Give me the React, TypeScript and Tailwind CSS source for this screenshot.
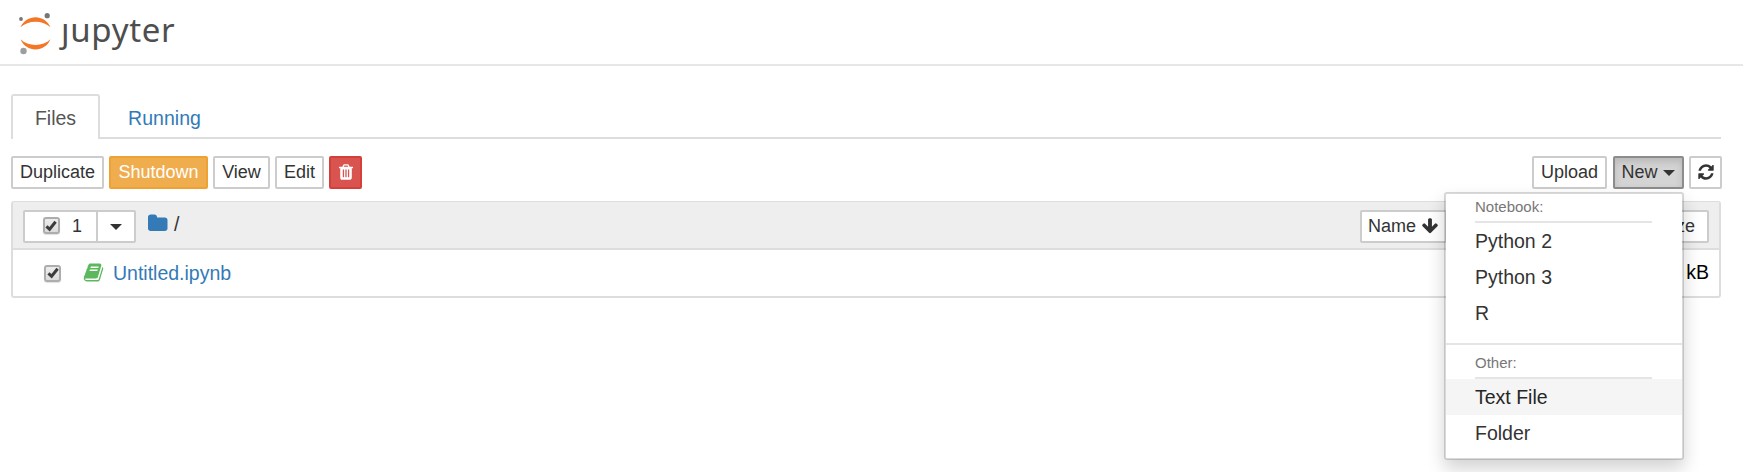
import React from "react";

const PATHS = {
  folder:
    "M1664 608v704q0 92-66 158t-158 66h-1216q-92 0-158-66t-66-158v-960q0-92 66-158t158-66h320q92 0 158 66t66 158v32h672q92 0 158 66t66 158z",
  book: "M1703 478q40 57 18 129l-275 906q-19 64-76.5 107.5t-122.5 43.5h-923q-77 0-148.5-53.5t-99.5-131.5q-24-67-2-127 0-4 3-27t4-37q1-8-3-21.5t-3-19.5q2-11 8-21t16.5-23.5 16.5-23.5q23-38 45-91.5t30-91.5q3-10 .5-30t-.5-28q3-11 17-28t17-23q21-36 42-92t25-90q1-9-2.5-32t.5-28q4-13 22-30.5t22-22.5q19-26 42.5-84.5t27.5-96.5q1-8-3-25.5t-2-26.5q2-8 9-18t18-23 17-21q8-12 16.5-30.5t15-35 16-36 19.5-32 26.5-23.5 36-11.5 47.5 5.5l-1 3q38-9 51-9h761q74 0 114 56t18 130l-274 906q-36 119-71.5 153.5t-128.5 34.5h-869q-27 0-38 15-11 16-1 43 24 70 144 70h923q29 0 56-15.5t35-41.5l300-987q7-22 5-57 38 15 59 43zm-1064 2q-4 13 2 22.5t20 9.5h608q13 0 25.5-9.5t16.5-22.5l21-64q4-13-2-22.5t-20-9.5h-608q-13 0-25.5 9.5t-16.5 22.5zm-83 256q-4 13 2 22.5t20 9.5h608q13 0 25.5-9.5t16.5-22.5l21-64q4-13-2-22.5t-20-9.5h-608q-13 0-25.5 9.5t-16.5 22.5z",
  arrowDown:
    "M1675 832q0 53-37 90l-651 652q-39 37-91 37-53 0-90-37l-651-652q-38-36-38-90 0-53 38-91l74-75q39-37 91-37 53 0 90 37l294 294v-704q0-52 38-90t90-38h128q52 0 90 38t38 90v704l294-294q37-37 90-37 52 0 91 37l75 75q37 39 37 91z",
  refresh:
    "M1639 1056q0 5-1 7-64 268-268 434.5t-478 166.5q-146 0-282.5-55t-243.5-157l-129 129q-19 19-45 19t-45-19-19-45v-448q0-26 19-45t45-19h448q26 0 45 19t19 45-19 45l-137 137q71 66 161 102t187 36q134 0 250-65t186-179q11-17 53-117 8-23 30-23h192q13 0 22.5 9.5t9.5 22.5zm25-800v448q0 26-19 45t-45 19h-448q-26 0-45-19t-19-45 19-45l138-138q-148-137-349-137-134 0-250 65t-186 179q-11 17-53 117-8 23-30 23h-199q-13 0-22.5-9.5t-9.5-22.5v-7q65-268 270-434.5t480-166.5q146 0 284 55.5t245 156.5l130-129q19-19 45-19t45 19 19 45z",
  trash:
    "M704 1376v-704q0-14-9-23t-23-9h-64q-14 0-23 9t-9 23v704q0 14 9 23t23 9h64q14 0 23-9t9-23zm256 0v-704q0-14-9-23t-23-9h-64q-14 0-23 9t-9 23v704q0 14 9 23t23 9h64q14 0 23-9t9-23zm256 0v-704q0-14-9-23t-23-9h-64q-14 0-23 9t-9 23v704q0 14 9 23t23 9h64q14 0 23-9t9-23zm-544-992h448l-48-117q-7-9-17-11h-317q-10 2-17 11zm928 32v64q0 14-9 23t-23 9h-96v948q0 83-47 143.5t-113 60.5h-832q-66 0-113-58.5t-47-141.5v-952h-96q-14 0-23-9t-9-23v-64q0-14 9-23t23-9h309l70-167q15-37 54-63t79-26h320q40 0 79 26t54 63l70 167h309q14 0 23 9t9 23z",
};

function Icon({ name, className }: { name: keyof typeof PATHS; className: string }) {
  return (
    <svg viewBox="0 0 1792 1792" fill="currentColor" className={`shrink-0 ${className}`}>
      <path d={PATHS[name]} />
    </svg>
  );
}

function Caret() {
  return (
    <svg viewBox="0 0 12 6" fill="currentColor" className="mt-0.5 h-1.5 w-3 shrink-0">
      <path d="M0 0h12L6 6z" />
    </svg>
  );
}

function Checkbox() {
  return (
    <span className="flex size-[17px] shrink-0 items-center justify-center rounded-[3px] border-2 border-[#adadad] bg-linear-to-b from-[#ededed] to-[#dcdcdc] shadow-[0_1px_1px_rgba(0,0,0,0.12)]">
      <svg viewBox="0 0 12 12" className="size-3 overflow-visible" fill="none" stroke="#3c3c3c" strokeWidth="3">
        <path d="M1.4 6.3 4.6 9.2 10.6 1.8" />
      </svg>
    </span>
  );
}

function Button({ className = "", children }: { className?: string; children: React.ReactNode }) {
  return (
    <button
      className={`flex h-[33px] shrink-0 items-center justify-center rounded-[2px] border-2 pb-[2px] text-lg leading-none whitespace-nowrap ${className}`}
    >
      {children}
    </button>
  );
}

const plain = "border-[#ccc] bg-white";

function Logo() {
  return (
    <div className="flex pt-3 pl-[18px]">
      <svg viewBox="0 0 34 44" className="h-11 w-[34px]">
        <path d="M2.5 15.3C8 1.8 27 1.8 32.5 15.3C25 7.8 10 7.8 2.5 15.3z" fill="#f37726" />
        <path d="M2.5 27.3C8 40.8 27 40.8 32.5 27.3C25 34.8 10 34.8 2.5 27.3z" fill="#f37726" />
        <circle cx="3" cy="7" r="1.9" fill="#767677" />
        <circle cx="29.2" cy="3.7" r="2.6" fill="#767677" />
        <circle cx="5.5" cy="39" r="3.2" fill="#9e9e9e" />
      </svg>
      <span className="ml-[9px] font-['Noto_Sans',sans-serif] text-[33px] leading-9 tracking-[0.7px] text-[#4e4e4e]">
        ȷupyter
      </span>
    </div>
  );
}

function MenuItem({ active = false, children }: { active?: boolean; children: React.ReactNode }) {
  return (
    <li className={`h-9 pl-[29px] text-[19.5px] leading-9 ${active ? "bg-[#f5f5f5] text-[#262626]" : ""}`}>
      {children}
    </li>
  );
}

function MenuHeading({ children }: { children: React.ReactNode }) {
  return (
    <li className="mr-[30px] ml-[29px] h-[29px] border-b-2 border-[#e5e5e5] text-[15px] leading-[26px] text-[#777]">
      {children}
    </li>
  );
}

function NewMenu() {
  return (
    <ul className="absolute top-9 right-0 z-10 h-[268px] w-[240px] rounded-[3px] border-2 border-black/15 bg-white bg-clip-padding shadow-[0_9px_18px_rgba(0,0,0,0.175)]">
      <MenuHeading>Notebook:</MenuHeading>
      <MenuItem>Python 2</MenuItem>
      <MenuItem>Python 3</MenuItem>
      <MenuItem>R</MenuItem>
      <li className="mt-3 mb-[5px] h-0.5 bg-[#e5e5e5]" />
      <MenuHeading>Other:</MenuHeading>
      <MenuItem active>Text File</MenuItem>
      <MenuItem>Folder</MenuItem>
    </ul>
  );
}

export default function App() {
  return (
    <div className="h-[472px] overflow-hidden bg-white font-['Liberation_Sans',Arial,sans-serif] text-[#333]">
      <header className="h-[66px] border-b-2 border-[#e7e7e7]">
        <Logo />
      </header>

      <main className="mr-[21px] ml-[11px] pt-7">
        <nav className="mr-px flex h-[45px] border-b-2 border-[#ddd] text-[19.5px]">
          <a className="h-[45px] w-[89px] rounded-t-[3px] border-2 border-b-0 border-[#ddd] bg-white text-center leading-[44px] text-[#555]">
            Files
          </a>
          <a className="pl-7 leading-[48px] tracking-[0.05px] text-[#337ab7]">Running</a>
        </nav>

        <div className="mt-[17px] flex h-[33px] gap-[5px]">
          <Button className={`w-[93px] ${plain}`}>Duplicate</Button>
          <Button className="w-[99px] border-[#eea236] bg-[#f0ad4e] text-white">Shutdown</Button>
          <Button className={`w-[57px] ${plain}`}>View</Button>
          <Button className={`w-[49px] ${plain}`}>Edit</Button>
          <Button className="w-[33px] border-[#d43f3a] bg-[#d9534f] text-white">
            <Icon name="trash" className="size-[18px]" />
          </Button>
          <div className="flex-1" />
          <Button className={`mr-px w-[75px] ${plain}`}>Upload</Button>
          <div className="relative">
            <Button className="w-[71px] gap-[5px] border-[#8c8c8c] bg-[#d4d4d4] pr-px shadow-[inset_0_4px_7px_rgba(0,0,0,0.125)]">
              New <Caret />
            </Button>
            <NewMenu />
          </div>
          <Button className={`w-[33px] ${plain}`}>
            <Icon name="refresh" className="size-[18px]" />
          </Button>
        </div>

        <section className="mt-3 mr-px h-[97px] rounded-[3px] border-2 border-t border-[#ddd]">
          <div className="flex h-12 items-start border-b-2 border-[#ddd] bg-[#eee] pt-2 pr-[10px] pl-[10px]">
            <Button className={`w-[75px] gap-3 rounded-r-none pl-1 ${plain}`}>
              <Checkbox />
              <span>1</span>
            </Button>
            <Button className={`-ml-0.5 w-10 rounded-l-none ${plain}`}>
              <Caret />
            </Button>
            <Icon name="folder" className="mt-[3px] ml-3 size-[21px] text-[#337ab7]" />
            <span className="ml-[5px] pt-[2px] text-[19.5px] leading-6">/</span>
            <div className="flex-1" />
            <Button className={`w-[87px] gap-[5px] rounded-r-none ${plain}`}>
              Name <Icon name="arrowDown" className="size-[18px]" />
            </Button>
            <Button className={`-ml-0.5 w-[264px] justify-end rounded-l-none pr-3 ${plain}`}>File size</Button>
          </div>
          <div className="flex h-[46px] items-center pr-[10px] pl-[31px] text-[19.5px]">
            <Checkbox />
            <Icon name="book" className="mb-0.5 ml-[22px] size-[21px] text-[#5cb85c]" />
            <a className="ml-[9px] pt-px text-[#337ab7]">Untitled.ipynb</a>
            <span className="ml-auto text-black">kB</span>
          </div>
        </section>
      </main>
    </div>
  );
}
